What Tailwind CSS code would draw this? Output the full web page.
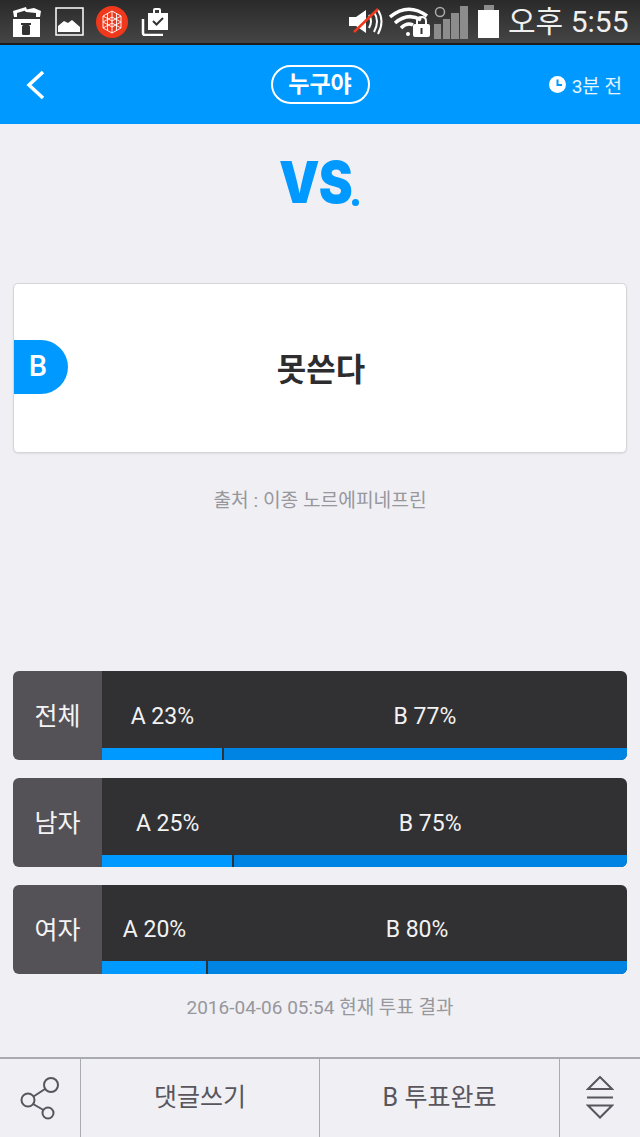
<!DOCTYPE html>
<html lang="ko">
<head>
<meta charset="utf-8">
<script src="https://cdn.jsdelivr.net/npm/@tailwindcss/browser@4"></script>
</head>
<body class="bg-[#efeff4] font-['Roboto','Noto_Sans_CJK_KR',sans-serif]">
<div class="w-[640px] h-[1137px] flex flex-col overflow-hidden bg-[#efeff4]">

  <!-- status bar -->
  <div class="h-[45px] shrink-0 flex items-center bg-gradient-to-b from-[#2a2a2a] to-[#454545] border-b-2 border-[#1c1c1c] text-white">
    <svg class="ml-[12px] mt-[2px]" width="30" height="31" viewBox="0 0 30 31">
      <path d="M1 4 L14 0 L15 3 L5 6 L5 10 L2 10Z M12 3 L22 1 L29 4 L28 10 L24 10 L24 6 L14 5Z M1 12 H28 V30 H1Z" fill="#fff"/>
      <rect x="10" y="18" width="8" height="10" rx="1.5" fill="#333"/>
      <rect x="9" y="16" width="10" height="2" fill="#333"/>
    </svg>
    <svg class="ml-[13px]" width="29" height="29" viewBox="0 0 29 29">
      <rect x="1" y="1" width="27" height="27" fill="none" stroke="#fff" stroke-width="1.5"/>
      <path d="M3 24 V19 L9 14 L13 16 L17 13 L25 20 V25 H3Z" fill="#fff"/>
    </svg>
    <div class="ml-[12px] w-[32px] h-[32px] rounded-full bg-[#f0391c] flex items-center justify-center">
      <svg width="22" height="24" viewBox="0 0 22 24" fill="none" stroke="#fff" stroke-width="0.9">
        <path d="M11 1 L20 6 V18 L11 23 L2 18 V6Z M11 1 V23 M6.5 3.5 V20.5 M15.5 3.5 V20.5 M2 6 L11 11 L20 6 M2 12 L11 17 L20 12 M2 12 L11 7 L20 12 M2 18 L11 13 L20 18"/>
      </svg>
    </div>
    <svg class="ml-[13px]" width="28" height="28" viewBox="0 0 28 28">
      <path d="M7 5 H12 V2 Q12 0 14 0 H18 Q20 0 20 2 V5 H27 V22 H7Z" fill="#fff"/>
      <path d="M14 2 H18 V5 H14Z" fill="#3a3a3a"/>
      <path d="M12 13 L15.5 16.5 L22 10" fill="none" stroke="#333" stroke-width="2"/>
      <path d="M2 11 V25 Q2 27 4 27 H22" fill="none" stroke="#fff" stroke-width="2.5"/>
    </svg>

    <svg class="ml-[180px]" width="34" height="30" viewBox="0 0 34 30">
      <path d="M0 10 H7 L17 3 V26 L7 19 H0Z" fill="#fff"/>
      <path d="M20 8 Q24 14 20 21 M25 5 Q31 14 25 25 M29 3 Q36 14 29 27" fill="none" stroke="#fff" stroke-width="2"/>
      <path d="M5 25 L29 2" stroke="#f03a1c" stroke-width="2.5"/>
    </svg>
    <svg class="ml-[6px]" width="41" height="30" viewBox="0 0 41 30">
      <path d="M1 10 Q19 -5 38 9 M6 16 Q19 5 32 13 M12 21 Q18 15 24 18" fill="none" stroke="#fff" stroke-width="3.5"/>
      <circle cx="19" cy="27" r="2" fill="#fff"/>
      <rect x="24" y="17" width="17" height="13" rx="2" fill="#fff"/>
      <path d="M28 17 V14 Q28 10 32.5 10 Q37 10 37 14 V17" fill="none" stroke="#fff" stroke-width="2"/>
      <rect x="31.5" y="21" width="2" height="6" fill="#333"/>
    </svg>
    <svg class="ml-[4px] mt-[1px]" width="34" height="33" viewBox="0 0 34 33">
      <circle cx="6" cy="6" r="4.5" fill="none" stroke="#aaa" stroke-width="1.5"/>
      <rect x="0" y="18" width="7" height="15" fill="#8c8c8c"/>
      <rect x="9" y="13" width="7" height="20" fill="#8c8c8c"/>
      <rect x="17" y="7" width="8" height="26" fill="#8c8c8c"/>
      <rect x="26" y="0" width="8" height="33" fill="#8c8c8c"/>
    </svg>
    <div class="ml-[10px] flex flex-col items-center">
      <div class="w-[10px] h-[5px] bg-[#8c8c8c]"></div>
      <div class="w-[21px] h-[28px] bg-white"></div>
    </div>
    <div class="ml-[9px] text-[30px] leading-none text-[#f0f0f0] whitespace-nowrap">오후 5:55</div>
  </div>

  <!-- header -->
  <div class="h-[79px] shrink-0 grid grid-cols-[1fr_auto_1fr] items-center bg-[#0099ff] text-white">
    <svg class="ml-[26px]" width="20" height="32" viewBox="0 0 20 32">
      <path d="M17 3 L3 16 L17 29" fill="none" stroke="#fff" stroke-width="3.5"/>
    </svg>
    <div class="h-[39px] w-[99px] rounded-full border-2 border-white flex items-center justify-center text-[23px] font-bold leading-none">누구야</div>
    <div class="flex items-center justify-end pr-[18px]">
      <svg width="17" height="17" viewBox="0 0 17 17">
        <circle cx="8.5" cy="8.5" r="8.5" fill="#fff"/>
        <path d="M8.5 3.5 V9 H13" fill="none" stroke="#0099ff" stroke-width="2"/>
      </svg>
      <span class="ml-[6px] pt-[3px] text-[19px] leading-none text-white/90">3분 전</span>
    </div>
  </div>

  <!-- vs logo -->
  <div class="h-[159px] shrink-0 flex justify-center items-start pt-[32px]">
    <div class="w-[70px] h-[52px] origin-left -translate-x-[3px] scale-x-[0.88] text-[#0099ff] font-black text-[58px] leading-[52px] font-['Inter',sans-serif] tracking-[-1px] whitespace-nowrap">VS</div>
    <div class="w-[7px] h-[7px] mt-[43px] rounded-full bg-[#0099ff]"></div>
  </div>

  <!-- card -->
  <div class="mx-[13px] h-[170px] shrink-0 relative flex items-center justify-center bg-white rounded-[5px] border border-[#d6d6da] shadow-[0_1px_2px_rgba(0,0,0,0.08)]">
    <div class="absolute left-0 top-[56px] w-[54px] h-[54px] rounded-r-full bg-[#0099ff] text-white text-[29px] font-medium flex items-center justify-center pr-[6px]">B</div>
    <div class="pt-[3px] pl-[2px] text-[32px] font-bold text-[#2d2d30] leading-none">못쓴다</div>
  </div>

  <div class="h-[96px] shrink-0 pt-[34px] text-center text-[19.2px] leading-[28px] text-[#97979c]">출처 : 이종 노르에피네프린</div>

  <!-- results -->
  <div class="mt-[122px] mx-[13px] flex flex-col gap-[18px]">
    <div class="h-[89px] flex rounded-[6px] overflow-hidden">
      <div class="w-[89px] pt-[3px] bg-[#545257] flex items-center justify-center text-[25px] text-[#f4f4f4]">전체</div>
      <div class="flex-1 flex bg-[#313033]">
        <div class="w-[23%] flex flex-col">
          <div class="flex-1 pt-[15px] flex items-center justify-center text-[23px] text-[#f2f2f2]">A 23%</div>
          <div class="h-[12px] mr-[1px] bg-[#0099ff]"></div>
        </div>
        <div class="flex-1 flex flex-col">
          <div class="flex-1 pt-[15px] flex items-center justify-center text-[23px] text-[#f2f2f2]">B 77%</div>
          <div class="h-[12px] -ml-[1px] bg-[#0084e3] border-l-2 border-[#313033]"></div>
        </div>
      </div>
    </div>
    <div class="h-[89px] flex rounded-[6px] overflow-hidden">
      <div class="w-[89px] pt-[3px] bg-[#545257] flex items-center justify-center text-[25px] text-[#f4f4f4]">남자</div>
      <div class="flex-1 flex bg-[#313033]">
        <div class="w-[25%] flex flex-col">
          <div class="flex-1 pt-[15px] flex items-center justify-center text-[23px] text-[#f2f2f2]">A 25%</div>
          <div class="h-[12px] mr-[1px] bg-[#0099ff]"></div>
        </div>
        <div class="flex-1 flex flex-col">
          <div class="flex-1 pt-[15px] flex items-center justify-center text-[23px] text-[#f2f2f2]">B 75%</div>
          <div class="h-[12px] -ml-[1px] bg-[#0084e3] border-l-2 border-[#313033]"></div>
        </div>
      </div>
    </div>
    <div class="h-[89px] flex rounded-[6px] overflow-hidden">
      <div class="w-[89px] pt-[3px] bg-[#545257] flex items-center justify-center text-[25px] text-[#f4f4f4]">여자</div>
      <div class="flex-1 flex bg-[#313033]">
        <div class="w-[20%] flex flex-col">
          <div class="flex-1 pt-[14px] flex items-center justify-center text-[23px] text-[#f2f2f2]">A 20%</div>
          <div class="h-[13px] mr-[1px] bg-[#0099ff]"></div>
        </div>
        <div class="flex-1 flex flex-col">
          <div class="flex-1 pt-[14px] flex items-center justify-center text-[23px] text-[#f2f2f2]">B 80%</div>
          <div class="h-[13px] -ml-[1px] bg-[#0084e3] border-l-2 border-[#313033]"></div>
        </div>
      </div>
    </div>
  </div>

  <div class="h-[83px] shrink-0 pt-[20px] text-center text-[19px] leading-[28px] text-[#97979c]">2016-04-06 05:54 현재 투표 결과</div>

  <!-- bottom bar -->
  <div class="flex-1 flex border-t-2 border-[#aaaab2] text-[#58565c] text-[25px]">
    <div class="w-[81px] flex items-center justify-center border-r border-[#aaaab2]">
      <svg class="ml-[1px]" width="42" height="44" viewBox="0 0 42 44" fill="none" stroke="#58565c" stroke-width="2">
        <circle cx="31" cy="9" r="7"/>
        <circle cx="8" cy="24" r="6.5"/>
        <circle cx="28" cy="37" r="5.5"/>
        <path d="M25 13 L13.5 20.5 M13 28 L23.5 34"/>
      </svg>
    </div>
    <div class="w-[239px] flex items-center justify-center border-r border-[#aaaab2]">댓글쓰기</div>
    <div class="w-[240px] flex items-center justify-center border-r border-[#aaaab2]">B 투표완료</div>
    <div class="flex-1 flex items-center justify-center">
      <svg width="28" height="44" viewBox="0 0 28 44" fill="none" stroke="#58565c" stroke-width="2">
        <path d="M2 13 L14 1 L26 13Z M1 21.5 H27 M2 29.5 L14 41.5 L26 29.5Z"/>
      </svg>
    </div>
  </div>
</div>
</body>
</html>
